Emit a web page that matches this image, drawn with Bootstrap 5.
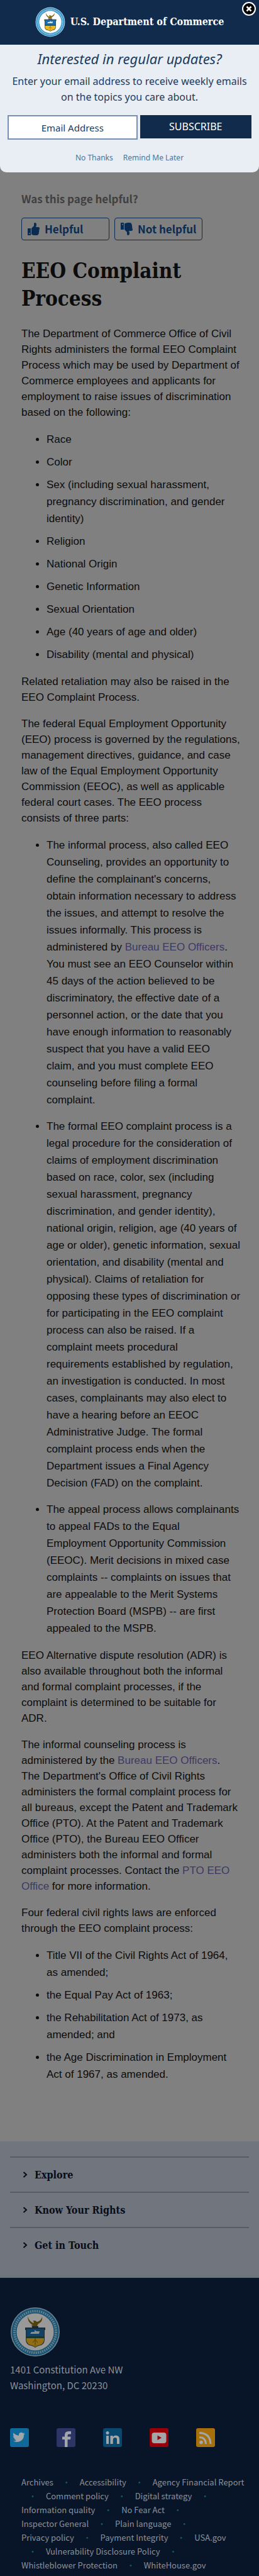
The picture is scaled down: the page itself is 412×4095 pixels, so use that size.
<!DOCTYPE html>
<html lang="en">
<head>
<meta charset="utf-8">
<meta name="viewport" content="width=device-width, initial-scale=1">
<title>EEO Complaint Process | U.S. Department of Commerce</title>
<link href="https://cdn.jsdelivr.net/npm/bootstrap@5.3.0/dist/css/bootstrap.min.css" rel="stylesheet">
<style>
  body { background: #808080; color: #0c0c0c; font: 17px/25px "Liberation Sans", Arial, sans-serif; }
  .ui-sans { font-family: "Noto Sans CJK SC", sans-serif; }
  .serif { font-family: "DejaVu Serif Condensed", "DejaVu Serif", serif; font-weight: 700; }
  .popup { background: #e8eef4; color: #1b3c60; border-radius: 0 0 10px 10px; font-family: "Noto Sans", sans-serif; }
  .popup-head { background: #112b4d; height: 71px; color: #fff; border-bottom: 1px solid #0c2240; }
  .brand { font-size: 16px; line-height: 24px; }
  .close-btn { top: 3px; right: 5px; }
  .ask { font-size: 22px; line-height: 28px; font-weight: 400; font-style: italic; margin-bottom: 10px; }
  .lede { font-size: 16px; line-height: 25px; }
  .signup { padding: 0 12px; }
  .email { flex: 6 1 0; min-width: 0; height: 39px; border: 2px solid #7590b5; background: #fff; color: #1b3c60; font-size: 15px; text-align: center; }
  .email::placeholder { color: #1b3c60; opacity: 1; }
  .subscribe { flex: 5 1 0; height: 37px; background: #112b4d; color: #fff; border: 0; font-size: 16px; }
  .later { padding: 21px 0 15px; font-size: 12px; line-height: 16px; }
  .later a { color: #4a74a0; text-decoration: none; }
  .article { padding: 28px 29px 76px 34px; }
  .helpful-q { font-size: 17px; line-height: 27px; font-weight: 700; color: #404040; }
  .vote { width: 140px; height: 36px; border: 1px solid #0b2c50; border-radius: 4px; background: transparent; color: #0b2c50; font-size: 17px; line-height: 24px; font-weight: 700; white-space: nowrap; }
  .title { font-size: 33px; line-height: 44px; margin: 27px 0 21px; }
  .article p { margin-bottom: 17px; }
  .article a { color: #3d3966; text-decoration: none; }
  .article ul { padding-left: 40px; margin-bottom: 17px; line-height: 27px; }
  .article li { margin-bottom: 9px; }
  .article li p { margin-bottom: 15px; }
  .links-panel { background: #71767e; padding: 24px 16px 21px; border-bottom: 4px solid #66767a; }
  .links-panel button { height: 56px; border: 0; border-top: 2px solid #575c65; background: transparent; color: #060d18; font-size: 16px; padding: 0 20px; gap: 11px; }
  .foot { background: #081529; color: #8b9098; padding: 46px 16px 6px; }
  .foot-seal { filter: brightness(.6); }
  .foot address { font-size: 15px; line-height: 25px; margin: 7px 0 56px; }
  .foot a { color: #8b9098; text-decoration: none; }
  .social { gap: 44px; }
  .foot-links { font-size: 13px; line-height: 22px; margin-top: 45px; padding-left: 18px; }
  .foot-links li { display: inline; }
  .foot-links a { white-space: nowrap; }
  .foot-links .sep { display: inline-block; width: 36px; text-align: center; color: #125a63; }
</style>
</head>
<body>
<svg width="0" height="0" class="position-absolute" aria-hidden="true">
  <symbol id="seal" viewBox="0 0 80 80">
    <circle cx="40" cy="40" r="39" fill="#b9dcf2"/>
    <circle cx="40" cy="40" r="37.500" fill="#2a8cc0"/>
    <circle cx="40" cy="40" r="33" fill="none" stroke="#a5d4ec" stroke-width="4" stroke-dasharray="2 1.500"/>
    <circle cx="40" cy="40" r="29.500" fill="#fff"/>
    <path d="M28 15c2 7 6 9 9 11l1-2-2-2h4l3 2c4-1 7-4 8-8 1 6-2 9-6 11l-2 3 2 1H33l3-2c-4-2-8-6-8-14z" fill="#8a6c14"/>
    <path d="M35 31h10v2H35z" fill="#2b3f52"/>
    <path d="M24 33h32v4h-1v15q0 9-9 10-4 1-6 3-2-2-6-3-9-1-9-10V37h-1z" fill="#35464c"/>
    <path d="M26 35h28v13H26z" fill="#1d6ea8"/>
    <path d="M32 43l2-3h5v-3l3 2h5l-1 4z" fill="#e6ecef"/>
    <path d="M26 47h28v3H26z" fill="#2c584a"/>
    <path d="M26 50h28v3q-1 7-8 8-4 1-6 3-2-2-6-3-7-1-8-8z" fill="#f3b61d"/>
    <path d="M40 50v12M36 57l4-5 4 5" stroke="#8a6c14" fill="none"/>
  </symbol>
  <symbol id="thumb" viewBox="0 0 20 20">
    <path fill-rule="evenodd" d="M1 9h5v11H1zM3 16.500v1.500h1.500v-1.500z"/>
    <path d="M7 9l4-4V2q0-2 1.500-2 2.500 0 2.500 3 0 2-1 4h4q2 0 2 2t-1 2.500q1 1 0 3-.5 1 0 2-.5 1.500-1 1.500 0 2-2 2h-4q-2 0-5-1.500z"/>
  </symbol>
  <symbol id="chevron" viewBox="0 0 8 10"><path d="M1.500 1l4.500 4-4.500 4" fill="none" stroke="#060d18" stroke-width="2"/></symbol>
</svg>

<section class="popup" aria-label="Email updates">
  <header class="popup-head position-relative d-flex align-items-center justify-content-center gap-2">
    <svg width="48" height="48" role="img" aria-label="Department seal"><use href="#seal"/></svg>
    <span class="brand serif">U.S. Department of Commerce</span>
    <button type="button" class="close-btn btn p-0 border-0 position-absolute d-flex" aria-label="Close">
      <svg width="22" height="22" viewBox="0 0 22 22"><circle cx="11" cy="11" r="10" fill="#000" stroke="#fff" stroke-width="2"/><path d="M7.500 7.500l7 7m0-7l-7 7" stroke="#fff" stroke-width="2.500"/></svg>
    </button>
  </header>
  <div class="text-center pt-2">
    <h2 class="ask">Interested in regular updates?</h2>
    <p class="lede mb-3 px-2">Enter your email address to receive weekly emails on the topics you care about.</p>
    <form class="signup d-flex gap-1">
      <input class="email" type="email" placeholder="Email Address" aria-label="Email Address">
      <button class="subscribe" type="button">SUBSCRIBE</button>
    </form>
    <div class="later d-flex justify-content-center gap-3"><a href="#">No Thanks</a><a href="#">Remind Me Later</a></div>
  </div>
</section>

<main class="article">
  <p class="helpful-q ui-sans">Was this page helpful?</p>
  <div class="d-flex gap-2 ui-sans">
    <button class="vote d-flex align-items-center gap-2 px-2" type="button">
      <svg width="20" height="20" fill="currentColor" aria-hidden="true"><use href="#thumb"/></svg>Helpful</button>
    <button class="vote d-flex align-items-center gap-2 px-2" type="button">
      <svg width="20" height="20" viewBox="0 0 20 20" fill="currentColor" aria-hidden="true"><g transform="matrix(1 0 0 -1 0 20)"><use href="#thumb"/></g></svg>Not helpful</button>
  </div>
  <h1 class="title serif">EEO Complaint Process</h1>
  <p>The Department of Commerce Office of Civil Rights administers the formal EEO Complaint Process which may be used by Department of Commerce employees and applicants for employment to raise issues of discrimination based on the following:</p>
  <ul>
    <li>Race</li>
    <li>Color</li>
    <li>Sex (including sexual harassment, pregnancy discrimination, and gender identity)</li>
    <li>Religion</li>
    <li>National Origin</li>
    <li>Genetic Information</li>
    <li>Sexual Orientation</li>
    <li>Age (40 years of age and older)</li>
    <li>Disability (mental and physical)</li>
  </ul>
  <p>Related retaliation may also be raised in the EEO Complaint Process.</p>
  <p>The federal Equal Employment Opportunity (EEO) process is governed by the regulations, management directives, guidance, and case law of the Equal Employment Opportunity Commission (EEOC), as well as applicable federal court cases. The EEO process consists of three parts:</p>
  <ul>
    <li><p>The informal process, also called EEO Counseling, provides an opportunity to define the complainant's concerns, obtain information necessary to address the issues, and attempt to resolve the issues informally. This process is administered by <a href="#">Bureau EEO Officers</a>. You must see an EEO Counselor within 45 days of the action believed to be discriminatory, the effective date of a personnel action, or the date that you have enough information to reasonably suspect that you have a valid EEO claim,&nbsp;and you must complete EEO counseling before filing a formal complaint.</p></li>
    <li><p>The formal EEO complaint process is a legal procedure for the consideration of claims of employment discrimination based on race, color, sex (including sexual harassment, pregnancy discrimination, and gender identity), national origin, religion, age (40 years of age or older), genetic information, sexual orientation, and disability (mental and physical). Claims of retaliation for opposing these types of discrimination or for participating in the EEO complaint process can also be raised. If a complaint meets procedural requirements established by regulation, an investigation is conducted. In most cases, complainants may also elect to have a hearing before an EEOC Administrative Judge. The formal complaint process ends when the Department issues a Final Agency Decision (FAD) on the complaint.</p></li>
    <li><p>The appeal process allows complainants to appeal FADs to the Equal Employment Opportunity Commission (EEOC). Merit decisions in mixed case complaints -- complaints on issues that are appealable to the Merit Systems Protection Board (MSPB) -- are first appealed to the MSPB.</p></li>
  </ul>
  <p>EEO Alternative dispute resolution (ADR) is also available throughout both the informal and formal complaint processes, if the complaint is determined to be suitable for ADR.</p>
  <p>The informal counseling process is administered by the <a href="#">Bureau EEO Officers</a>. The Department's Office of Civil Rights administers the formal complaint process for all bureaus, except the Patent and Trademark Office (PTO). At the Patent and Trademark Office (PTO), the Bureau EEO Officer administers both the informal and formal complaint processes. Contact the <a href="#">PTO EEO Office</a> for more information.</p>
  <p>Four federal civil rights laws are enforced through the EEO complaint process:</p>
  <ul>
    <li>Title VII of the Civil Rights Act of 1964, as amended;</li>
    <li>the Equal Pay Act of 1963;</li>
    <li>the Rehabilitation Act of 1973, as amended; and</li>
    <li>the Age Discrimination in Employment Act of 1967, as amended.</li>
  </ul>
</main>

<nav class="links-panel" aria-label="Site sections">
  <button type="button" class="serif w-100 d-flex align-items-center"><svg width="8" height="10" aria-hidden="true"><use href="#chevron"/></svg>Explore</button>
  <button type="button" class="serif w-100 d-flex align-items-center"><svg width="8" height="10" aria-hidden="true"><use href="#chevron"/></svg>Know Your Rights</button>
  <button type="button" class="serif w-100 d-flex align-items-center"><svg width="8" height="10" aria-hidden="true"><use href="#chevron"/></svg>Get in Touch</button>
</nav>

<footer class="foot ui-sans">
  <svg class="foot-seal d-block" width="80" height="80" role="img" aria-label="Department seal"><use href="#seal"/></svg>
  <address>1401 Constitution Ave NW<br>Washington, DC 20230</address>
  <div class="social d-flex">
    <a href="#" class="d-flex" aria-label="Twitter"><svg width="30" height="30" viewBox="0 0 30 30"><rect width="30" height="30" rx="3" fill="#10699b"/><path d="M5 20.500q3 .2 5-1.500-2.500-.2-3.500-2.500h1.500q-3-1-3-4l1.500.4Q4 11 5.500 7.600q3.500 4 8.500 4.200-.6-4.300 3.500-5 2 0 3.200 1.300l2.300-.9-1.500 2.100 2.500-.5-2.100 2q.2 6-4.400 9.200-6 3.500-12.500.5z" fill="#a2a6a8"/></svg></a>
    <a href="#" class="d-flex" aria-label="Facebook"><svg width="30" height="30" viewBox="0 0 30 30"><rect width="30" height="30" rx="3" fill="#2c3566"/><path d="M13 30V18H9v-4.500h4V11q0-6 6-6h4v4.500h-3q-2.500 0-2.500 2v2h5L22 18h-4.500v12z" fill="#a2a6a8"/></svg></a>
    <a href="#" class="d-flex" aria-label="LinkedIn"><svg width="30" height="30" viewBox="0 0 30 30"><rect width="30" height="30" rx="3" fill="#09496f"/><path d="M5 12h4v13H5zM11.500 12h4v2q1.500-2.500 4.500-2.500 6 0 6 6V25h-4v-7q0-3-2.800-3-3.500 0-3.500 4v6h-4.200z" fill="#a2a6a8"/><circle cx="7" cy="7.500" r="2.500" fill="#a2a6a8"/></svg></a>
    <a href="#" class="d-flex" aria-label="YouTube"><svg width="30" height="30" viewBox="0 0 30 30"><rect width="30" height="30" rx="3" fill="#98000a"/><rect x="3.500" y="7" width="23" height="17" rx="4" fill="#a2a6a8"/><path d="M12.500 11.500v7.500l6.500-3.800z" fill="#98000a"/></svg></a>
    <a href="#" class="d-flex" aria-label="RSS"><svg width="30" height="30" viewBox="0 0 30 30"><rect width="30" height="30" rx="3" fill="#a8700c"/><g fill="none" stroke="#a2a6a8" stroke-width="3"><path d="M5 14.500q10 0 10.500 10.500M5 7.500q17 0 18 17.500"/></g><circle cx="8" cy="22.500" r="2.800" fill="#a2a6a8"/></svg></a>
  </div>
  <ul class="foot-links list-unstyled mb-0">
    <li><a href="#">Archives</a></li>
    <li><span class="sep">•</span> <a href="#">Accessibility</a></li>
    <li><span class="sep">•</span> <a href="#">Agency Financial Report</a></li>
    <li><span class="sep">•</span> <a href="#">Comment policy</a></li>
    <li><span class="sep">•</span> <a href="#">Digital strategy</a></li>
    <li><span class="sep">•</span> <a href="#">Information quality</a></li>
    <li><span class="sep">•</span> <a href="#">No Fear Act</a></li>
    <li><span class="sep">•</span> <a href="#">Inspector General</a></li>
    <li><span class="sep">•</span> <a href="#">Plain language</a></li>
    <li><span class="sep">•</span> <a href="#">Privacy policy</a></li>
    <li><span class="sep">•</span> <a href="#">Payment Integrity</a></li>
    <li><span class="sep">•</span> <a href="#">USA.gov</a></li>
    <li><span class="sep">•</span> <a href="#">Vulnerability Disclosure Policy</a></li>
    <li><span class="sep">•</span> <a href="#">Whistleblower Protection</a></li>
    <li><span class="sep">•</span> <a href="#">WhiteHouse.gov</a></li>
  </ul>
</footer>
<script src="https://cdn.jsdelivr.net/npm/bootstrap@5.3.0/dist/js/bootstrap.bundle.min.js"></script>
</body>
</html>
